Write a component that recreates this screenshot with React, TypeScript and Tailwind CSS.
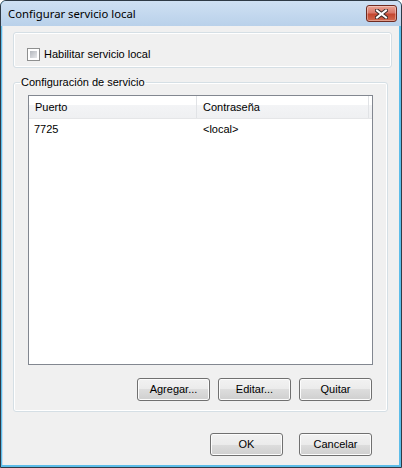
import React from "react";

function CloseBtn() {
  return (
    <div className="w-[31px] h-[17px] rounded-[3px] border border-[#6f2a20] bg-[linear-gradient(to_bottom,#eaa393_0%,#d9786a_45%,#c4462f_55%,#d26a4f_100%)] shadow-[inset_0_0_0_1px_rgba(255,255,255,0.35)] flex items-center justify-center">
      <svg width="13" height="10" viewBox="0 0 13 10">
        <path d="M2 1.5 L11 8.5 M11 1.5 L2 8.5" stroke="#3a2a28" strokeWidth="4" strokeLinecap="square" />
        <path d="M2 1.5 L11 8.5 M11 1.5 L2 8.5" stroke="#ffffff" strokeWidth="2" strokeLinecap="square" />
      </svg>
    </div>
  );
}

function Btn({ label, w = "w-[73px]" }: { label: string; w?: string }) {
  return (
    <div
      className={`${w} h-[23px] rounded-[3px] border border-[#707070] bg-[linear-gradient(to_bottom,#f2f2f2_0%,#ebebeb_50%,#dddddd_50%,#cfcfcf_100%)] shadow-[inset_0_0_0_1px_#fcfcfc] flex items-center justify-center`}
    >
      {label}
    </div>
  );
}

export default function App() {
  return (
    <div className="w-[402px] h-[468px] flex flex-col bg-[#5cbde9] border border-[#2f3a46] rounded-t-[6px] overflow-hidden font-['Liberation_Sans',Arial,sans-serif] text-[11px] text-black">
      <div className="h-[25px] shrink-0 flex items-center justify-between pl-[7px] pr-[4px] bg-[linear-gradient(to_bottom,#cfe0f3,#b9d1ea)]">
        <span className="text-[11.3px] font-['Noto_Sans',sans-serif] leading-none">Configurar servicio local</span>
        <CloseBtn />
      </div>
      <div className="flex-1 ml-[1px] mr-[2px] mb-[2px] bg-[#f0f0f0] flex flex-col pl-[10px] pt-[6px] border-l border-[#c7def2]">
        <div className="w-[379px] h-[36px] shrink-0 border border-[#d5dfe5] rounded-[3px] shadow-[inset_0_0_0_1px_#ffffff] pl-[13px] pt-[15px]">
          <div className="flex items-center gap-[4px]">
            <div className="w-[13px] h-[13px] border border-[#8e8f8f] bg-white p-[2px]">
              <div className="w-full h-full bg-[linear-gradient(135deg,#b3b7bd,#e8e9eb)]" />
            </div>
            <span className="leading-[13px]">Habilitar servicio local</span>
          </div>
        </div>

        <fieldset className="w-[375px] h-[336px] shrink-0 mt-[8px] border border-[#d5dfe5] rounded-[3px] shadow-[inset_0_0_0_1px_#ffffff] p-0 m-0">
          <legend className="ml-[6px] px-[1px] leading-[13px]">Configuración de servicio</legend>
          <div className="pl-[14px] pt-[6px]">
            <div className="w-[345px] h-[270px] border border-[#828790] bg-white flex flex-col">
              <div className="h-[23px] flex bg-[linear-gradient(to_bottom,#ffffff_0%,#ffffff_40%,#f3f4f6_41%,#eff0f2_100%)] border-b border-[#e5e6e8]">
                <div className="w-[168px] pl-[6px] flex items-center border-r border-[#e1e3e6]">Puerto</div>
                <div className="w-[172px] pl-[6px] flex items-center border-r border-[#e1e3e6]">Contraseña</div>
              </div>
              <div className="h-[20px] flex items-center">
                <div className="w-[168px] pl-[5px]">7725</div>
                <div className="pl-[6px]">&lt;local&gt;</div>
              </div>
            </div>
            <div className="w-[345px] flex justify-end gap-[8px] pr-[1px] mt-[13px]">
              <Btn label="Agregar..." />
              <Btn label="Editar..." />
              <Btn label="Quitar" />
            </div>
          </div>
        </fieldset>

        <div className="w-[359px] flex justify-end gap-[16px] mt-[21px]">
          <Btn label="OK" />
          <Btn label="Cancelar" />
        </div>
      </div>
    </div>
  );
}
